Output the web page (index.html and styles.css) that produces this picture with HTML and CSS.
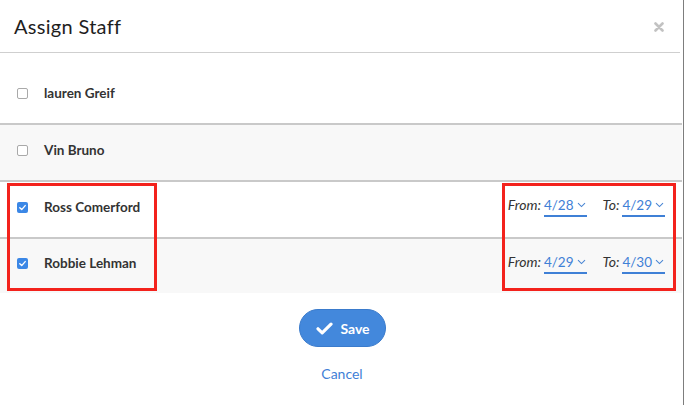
FILE: index.html
```html
<!DOCTYPE html>
<html>
<head>
<meta charset="utf-8">
<link rel="stylesheet" href="styles.css">
</head>
<body>
<div class="modal">
  <div class="modal-header">
    <h1 class="title">Assign Staff</h1>
    <span class="close" aria-label="close">
      <svg width="10" height="10" viewBox="0 0 10 10"><path d="M1.5 1.5 L8.5 8.5 M8.5 1.5 L1.5 8.5" stroke="#c2c2c2" stroke-width="2.6" stroke-linecap="round"/></svg>
    </span>
  </div>
  <div class="staff-list">
    <div class="row first">
      <span class="cb"></span><span class="name">lauren Greif</span>
    </div>
    <div class="row alt">
      <span class="cb"></span><span class="name">Vin Bruno</span>
    </div>
    <div class="row">
      <span class="cb checked"><svg width="9" height="9" viewBox="0 0 9 9"><path d="M1.8 4.8 L3.7 6.6 L7.2 2.6" fill="none" stroke="#fff" stroke-width="1.4" stroke-linecap="round" stroke-linejoin="round"/></svg></span><span class="name">Ross Comerford</span>
      <div class="dates">
        <span class="lbl">From:</span><span class="pick">4/28<svg class="chev" width="9" height="6" viewBox="0 0 9 6"><path d="M1 1.2 L4.5 4.6 L8 1.2" fill="none" stroke="#4a86d4" stroke-width="1.1"/></svg></span>
        <span class="lbl to">To:</span><span class="pick">4/29<svg class="chev" width="9" height="6" viewBox="0 0 9 6"><path d="M1 1.2 L4.5 4.6 L8 1.2" fill="none" stroke="#4a86d4" stroke-width="1.1"/></svg></span>
      </div>
    </div>
    <div class="row alt last">
      <span class="cb checked"><svg width="9" height="9" viewBox="0 0 9 9"><path d="M1.8 4.8 L3.7 6.6 L7.2 2.6" fill="none" stroke="#fff" stroke-width="1.4" stroke-linecap="round" stroke-linejoin="round"/></svg></span><span class="name">Robbie Lehman</span>
      <div class="dates">
        <span class="lbl">From:</span><span class="pick">4/29<svg class="chev" width="9" height="6" viewBox="0 0 9 6"><path d="M1 1.2 L4.5 4.6 L8 1.2" fill="none" stroke="#4a86d4" stroke-width="1.1"/></svg></span>
        <span class="lbl to">To:</span><span class="pick">4/30<svg class="chev" width="9" height="6" viewBox="0 0 9 6"><path d="M1 1.2 L4.5 4.6 L8 1.2" fill="none" stroke="#4a86d4" stroke-width="1.1"/></svg></span>
      </div>
    </div>
    <div class="mark mark-left"></div>
    <div class="mark mark-right"></div>
  </div>
  <div class="footer">
    <button class="save"><svg width="17" height="13" viewBox="0 0 17 13"><path d="M2 6.8 L6.2 10.8 L15 2.2" fill="none" stroke="#fff" stroke-width="3.2" stroke-linecap="round" stroke-linejoin="round"/></svg><span>Save</span></button>
    <a class="cancel">Cancel</a>
  </div>
</div>
</body>
</html>
```
FILE: styles.css
```css
html, body {
  margin: 0;
  padding: 0;
  background: #fff;
}
body {
  width: 684px;
  height: 405px;
  overflow: hidden;
  font-family: Lato, "Open Sans", sans-serif;
}
.modal {
  width: 683px;
  height: 405px;
  border-right: 1px solid #7d7d7d;
  background: #fff;
}
.modal-header {
  height: 52px;
  border-bottom: 1px solid #cfcfcf;
  display: flex;
  align-items: center;
  justify-content: space-between;
  padding: 0 16px 0 14px;
  margin-right: 3px;
}
.title {
  margin: 0;
  font-size: 20px;
  font-weight: 400;
  color: #1e1e1e;
  letter-spacing: 0.3px;
}
.close {
  display: flex;
  margin-top: 1px;
}
.staff-list {
  position: relative;
  margin-right: 1px;
}
.row {
  height: 49px;
  display: flex;
  align-items: center;
  padding: 0 17px 6px 17px;
  border-bottom: 2px solid #c9c9c9;
}
.row.first {
  padding-top: 15px;
}
.row.alt {
  background: #f8f8f8;
}
.row.last {
  border-bottom: none;
  height: 48px;
}
.cb {
  width: 9px;
  height: 9px;
  border: 1px solid #a9a9a9;
  border-radius: 2px;
  background: #fff;
  margin-right: 15px;
  display: flex;
  align-items: center;
  justify-content: center;
  flex: none;
  margin-top: 1px;
}
.cb.checked {
  width: 11px;
  height: 11px;
  border: none;
  background: #3b87e6;
}
.name {
  font-weight: 700;
  font-size: 13.5px;
  color: #333;
  margin-left: 1px;
}
.dates {
  margin-left: auto;
  display: flex;
  align-items: baseline;
  font-size: 14px;
}
.lbl {
  font-style: italic;
  color: #333;
  font-size: 14px;
  margin-right: 3px;
}
.lbl.to {
  margin-left: 16px;
  margin-right: 3px;
}
.pick {
  color: #3f80d6;
  font-weight: 400;
  font-size: 13.5px;
  border-bottom: 2px solid #3f80d6;
  padding: 0 1px 2px 0;
  display: inline-flex;
  align-items: center;
}
.chev {
  margin-left: 3px;
}
.mark {
  position: absolute;
  top: 130px;
  height: 102px;
  border: 3px solid #f3221c;
}
.mark-left {
  left: 7px;
  width: 144px;
}
.mark-right {
  left: 502px;
  width: 168px;
}
.footer {
  display: flex;
  flex-direction: column;
  align-items: center;
  padding-top: 16px;
}
.save {
  width: 87px;
  height: 38px;
  border-radius: 19px;
  background: #4388dc;
  border: 1px solid #3a7bcc;
  color: #fff;
  font-family: Lato, "Open Sans", sans-serif;
  font-weight: 700;
  font-size: 14px;
  display: flex;
  align-items: center;
  justify-content: center;
  gap: 7px;
  padding: 0 0 0 2px;
  margin-left: 1px;
}
.cancel {
  margin-top: 18px;
  color: #3f80d6;
  font-size: 14px;
  margin-left: 1px;
}
```
